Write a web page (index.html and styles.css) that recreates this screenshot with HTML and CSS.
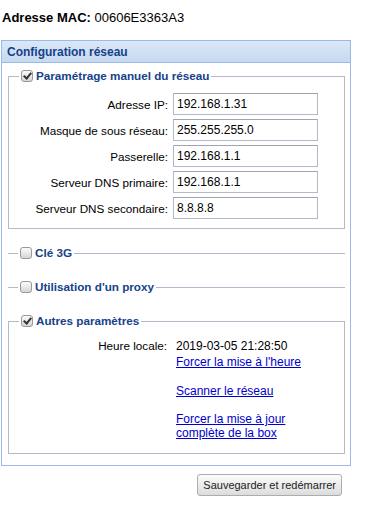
FILE: index.html
```html
<!DOCTYPE html>
<html lang="fr">
<head>
  <meta charset="UTF-8" />
  <title>Configuration réseau</title>
  <link rel="stylesheet" href="styles.css">
</head>
<body>
  <div class="mac"><b>Adresse MAC:</b> 00606E3363A3</div>

  <div class="panel">
    <div class="panel-header">Configuration réseau</div>
    <div class="panel-body">
      <fieldset class="group">
        <legend><span class="check on"></span>Paramétrage manuel du réseau</legend>
        <div class="row"><label>Adresse IP:</label><input class="field" value="192.168.1.31"></div>
        <div class="row"><label>Masque de sous réseau:</label><input class="field" value="255.255.255.0"></div>
        <div class="row"><label>Passerelle:</label><input class="field" value="192.168.1.1"></div>
        <div class="row"><label>Serveur DNS primaire:</label><input class="field" value="192.168.1.1"></div>
        <div class="row"><label>Serveur DNS secondaire:</label><input class="field" value="8.8.8.8"></div>
      </fieldset>

      <fieldset class="group collapsed key3g">
        <legend><span class="check"></span>Clé 3G</legend>
      </fieldset>

      <fieldset class="group collapsed proxy">
        <legend><span class="check"></span>Utilisation d'un proxy</legend>
      </fieldset>

      <fieldset class="group other">
        <legend><span class="check on"></span>Autres paramètres</legend>
        <div class="info">
          <label>Heure locale:</label>
          <div class="value">
            <div class="time">2019-03-05 21:28:50</div>
            <div class="links">
              <a href="#">Forcer la mise à l'heure</a><br><br>
              <a href="#">Scanner le réseau</a><br><br>
              <a href="#">Forcer la mise à jour<br>complète de la box</a>
            </div>
          </div>
        </div>
      </fieldset>
    </div>
  </div>

  <div class="actions">
    <button class="btn">Sauvegarder et redémarrer</button>
  </div>
</body>
</html>
```

FILE: styles.css
```css
* {
  box-sizing: border-box;
}
body {
  margin: 0;
  font-family: 'Liberation Sans', Arial, sans-serif;
  color: #000;
  background: #fff;
}
.mac {
  font-size: 13px;
  padding: 10px 0 0 2px;
  height: 40px;
}
.panel {
  width: 350px;
  margin-left: 1px;
  border: 1px solid #99bbe8;
}
.panel-header {
  height: 22px;
  padding: 4px 0 0 5px;
  font-size: 12px;
  font-weight: bold;
  color: #15428b;
  background: linear-gradient(#dae7f6, #c7d9f0);
  border-bottom: 1px solid #99bbe8;
}
.panel-body {
  padding: 6px 5px 11px 6px;
}
.group {
  margin: 0;
  padding: 0 10px 9px 10px;
  border: 1px solid #b5b8c8;
}
.group legend {
  padding: 0 2px;
  font-size: 11.7px;
  font-weight: bold;
  color: #15428b;
  line-height: 14px;
  display: flex;
  align-items: center;
}
.check {
  width: 12px;
  height: 12px;
  margin-right: 3px;
  border: 1px solid #999;
  border-radius: 3px;
  background: linear-gradient(#fbfbfb, #d6d6d6);
  position: relative;
}
.check.on::after {
  content: '';
  position: absolute;
  left: 3px;
  top: 0;
  width: 3px;
  height: 6px;
  border: solid #333;
  border-width: 0 2px 2px 0;
  transform: rotate(40deg);
}
.row {
  display: grid;
  grid-template-columns: 149px 145px;
  column-gap: 5px;
  align-items: center;
  margin-top: 4px;
}
.group .row:first-of-type {
  margin-top: 10px;
}
.row label,
.info label {
  text-align: right;
  font-size: 11.7px;
}
.field {
  height: 22px;
  padding: 0 3px;
  font-family: 'Liberation Sans', Arial, sans-serif;
  font-size: 12px;
  color: #000;
  border: 1px solid #b5b8c8;
  border-top-color: #a0a3b0;
  background: #fff;
}
.collapsed {
  border-width: 1px 0 0 0;
  padding-bottom: 0;
}
.key3g {
  margin-top: 17px;
}
.proxy {
  margin-top: 20px;
}
.other {
  margin-top: 20px;
  padding-bottom: 12px;
}
.info {
  display: grid;
  grid-template-columns: 148px auto;
  column-gap: 9px;
  font-size: 12px;
  margin-top: 11px;
}
.info label {
  line-height: 14px;
}
.time {
  line-height: 14px;
  margin-bottom: 2px;
}
.links {
  line-height: 14.3px;
}
.links a {
  color: #0000cc;
}
.actions {
  width: 342px;
  display: flex;
  justify-content: flex-end;
  margin-top: 8px;
}
.btn {
  height: 22px;
  padding: 0 5px;
  font-family: 'Liberation Sans', Arial, sans-serif;
  font-size: 11px;
  color: #222;
  border: 1px solid #adadad;
  border-radius: 3px;
  background: linear-gradient(#fcfcfc, #dcdcdc);
}
```
